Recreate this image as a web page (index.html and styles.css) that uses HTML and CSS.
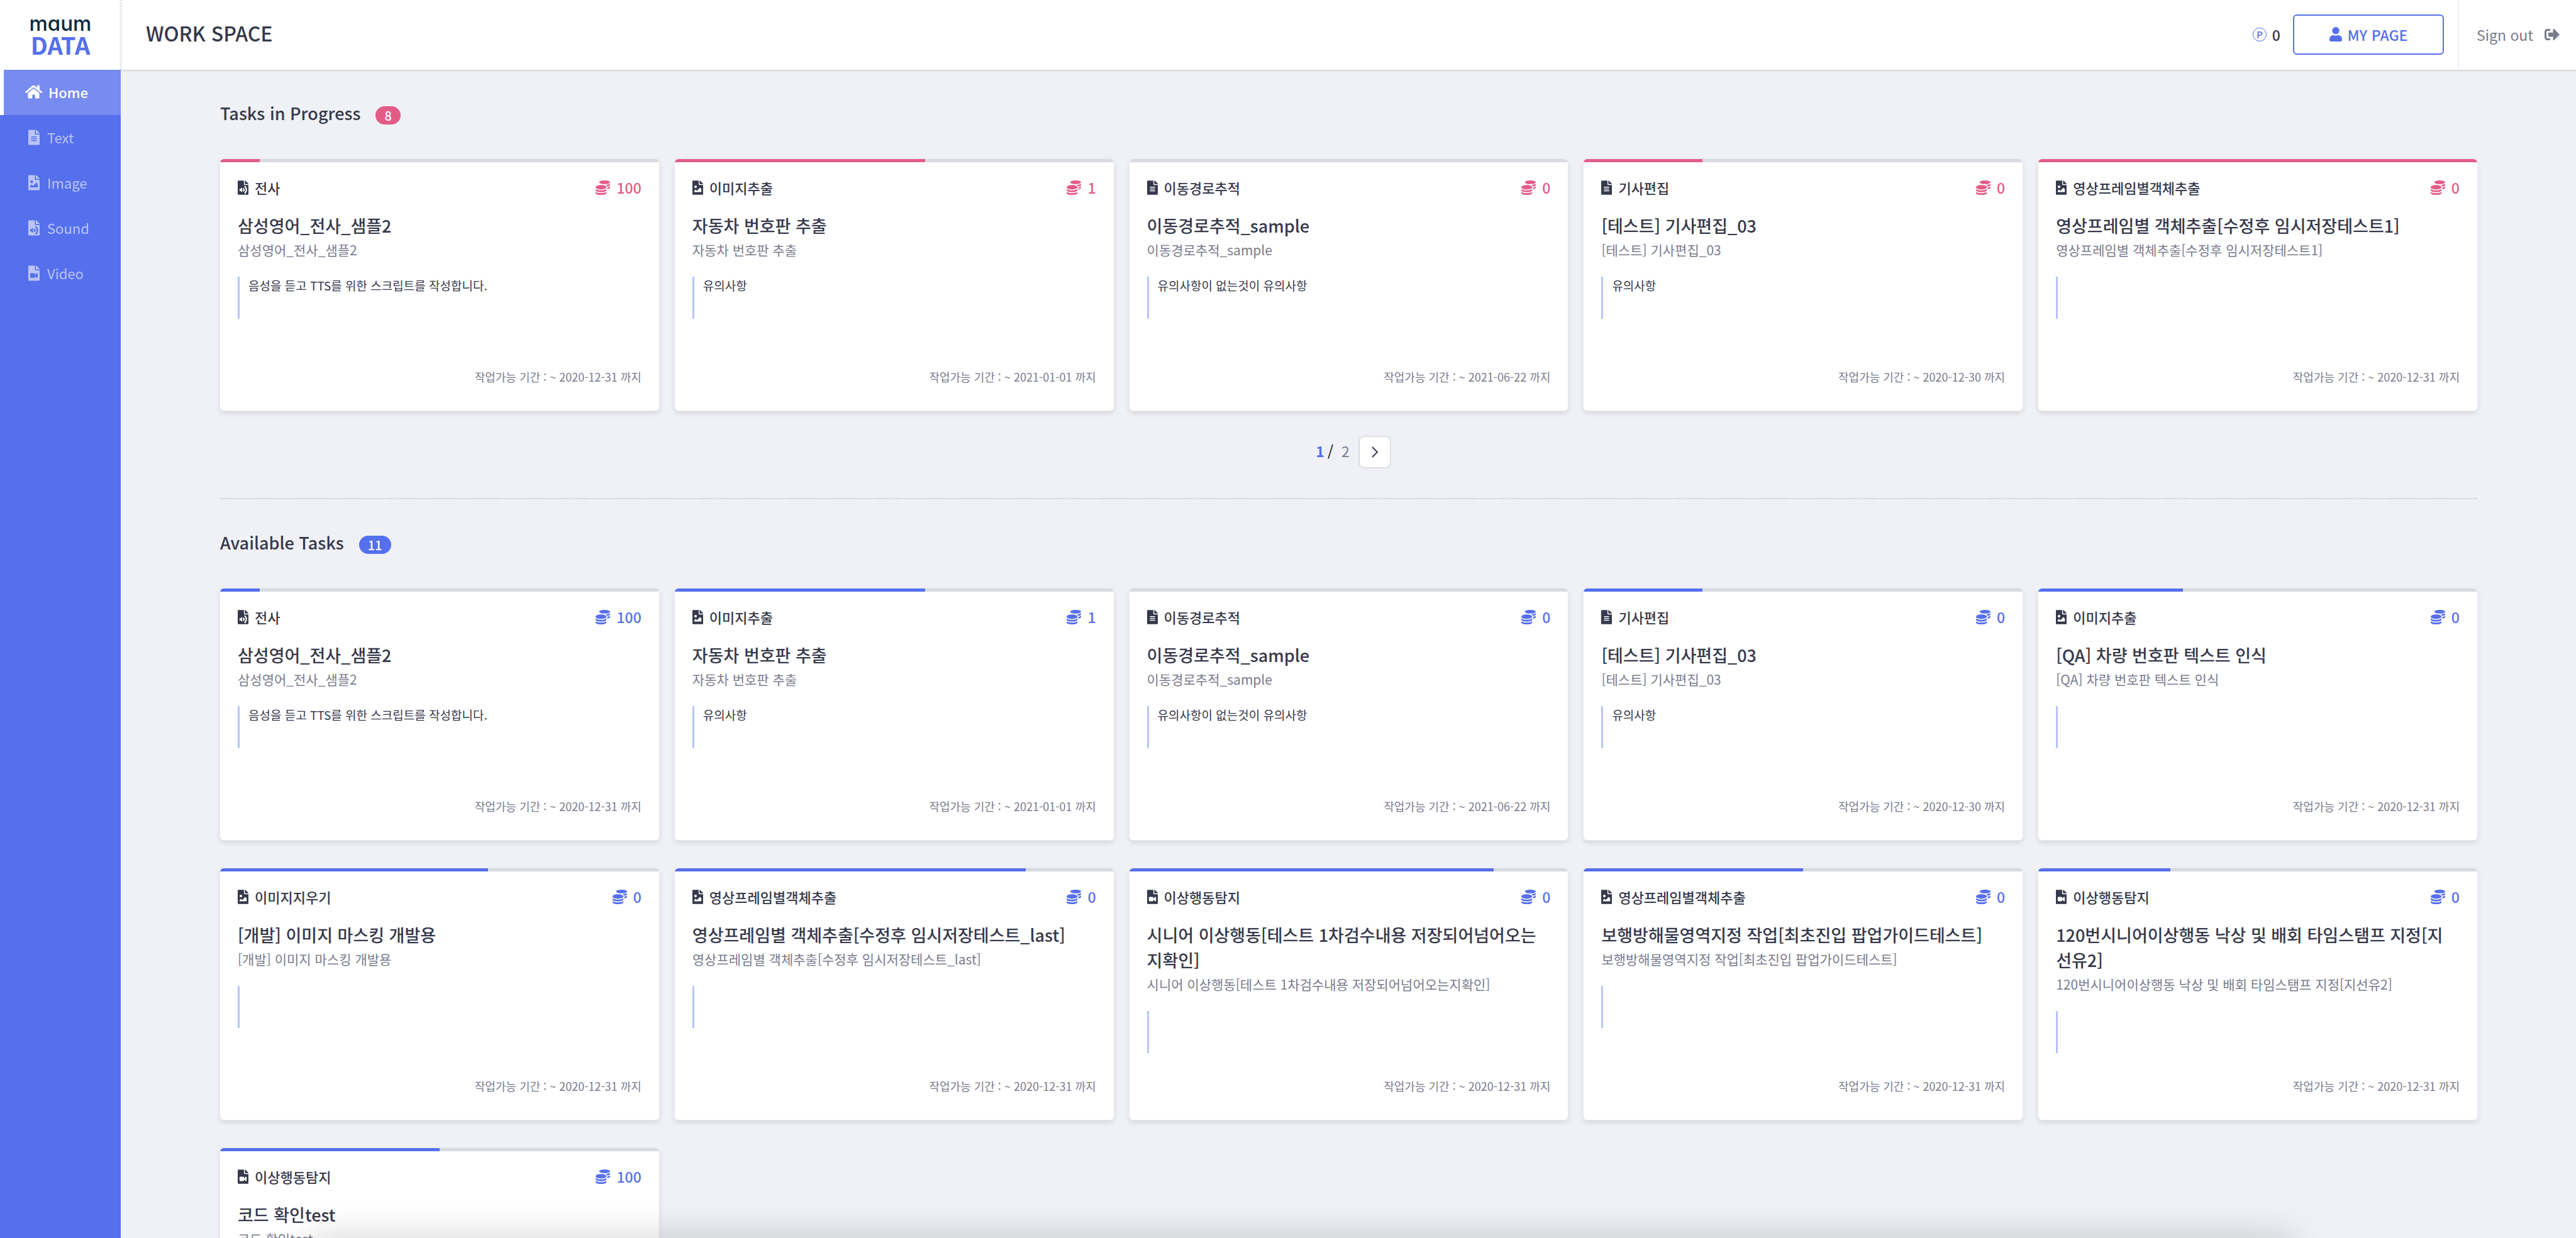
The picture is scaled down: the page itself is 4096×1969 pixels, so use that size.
FILE: index.html
```html
<!DOCTYPE html>
<html lang="ko">
<head>
<meta charset="utf-8">
<title>WORK SPACE</title>
<link rel="stylesheet" href="styles.css">
</head>
<body>
<svg class="sprite" aria-hidden="true">
  <symbol id="i-home" viewBox="0 0 576 512"><path d="M280 149 96 300v164a16 16 0 0 0 16 16l112-1a16 16 0 0 0 16-16v-95a16 16 0 0 1 16-16h64a16 16 0 0 1 16 16v95a16 16 0 0 0 16 16l112 1a16 16 0 0 0 16-16V300L296 149a12 12 0 0 0-16 0zM572 251l-84-69V44a12 12 0 0 0-12-12h-56a12 12 0 0 0-12 12v72l-90-74a48 48 0 0 0-61 0L4 251a12 12 0 0 0-1 17l25 31a12 12 0 0 0 17 2l235-194a12 12 0 0 1 16 0l235 194a12 12 0 0 0 17-2l25-31a12 12 0 0 0-1-17z"/></symbol>
  <symbol id="i-text" viewBox="0 0 384 512"><path fill-rule="evenodd" d="M224 136V0H24A24 24 0 0 0 0 24v464a24 24 0 0 0 24 24h336a24 24 0 0 0 24-24V160H248a24 24 0 0 1-24-24zm64 236c0 7-5 12-12 12H108c-7 0-12-5-12-12v-8c0-7 5-12 12-12h168c7 0 12 5 12 12zm0-64c0 7-5 12-12 12H108c-7 0-12-5-12-12v-8c0-7 5-12 12-12h168c7 0 12 5 12 12zm0-72v8c0 7-5 12-12 12H108c-7 0-12-5-12-12v-8c0-7 5-12 12-12h168c7 0 12 5 12 12zm96-114v6H256V0h6a24 24 0 0 1 17 7l98 98a24 24 0 0 1 7 17z"/></symbol>
  <symbol id="i-image" viewBox="0 0 384 512"><path fill-rule="evenodd" d="M384 122v6H256V0h6a24 24 0 0 1 17 7l98 98a24 24 0 0 1 7 17zm-136 38a24 24 0 0 1-24-24V0H24A24 24 0 0 0 0 24v464a24 24 0 0 0 24 24h336a24 24 0 0 0 24-24V160zm-135 16a48 48 0 1 1 0 96 48 48 0 0 1 0-96zm208 240H65l1-49 39-39a12 12 0 0 1 16 1l39 39 104-105a12 12 0 0 1 17 0l40 41z"/></symbol>
  <symbol id="i-sound" viewBox="0 0 384 512"><path fill-rule="evenodd" d="M224 136V0H24A24 24 0 0 0 0 24v464a24 24 0 0 0 24 24h336a24 24 0 0 0 24-24V160H248a24 24 0 0 1-24-24zm-64 268a12 12 0 0 1-20 9l-36-37H76a12 12 0 0 1-12-12v-56a12 12 0 0 1 12-12h28l36-37a12 12 0 0 1 20 9zm33-48a27 27 0 0 0 0-39c-22-22 12-57 35-34a75 75 0 0 1 0 107c-22 22-57-11-35-34zm86-154a190 190 0 0 1 0 268c-22 22-57-11-35-34a141 141 0 0 0 0-199c-22-23 13-57 35-35zm105-80v6H256V0h6a24 24 0 0 1 17 7l98 98a24 24 0 0 1 7 17z"/></symbol>
  <symbol id="i-video" viewBox="0 0 384 512"><path fill-rule="evenodd" d="M384 122v6H256V0h6a24 24 0 0 1 17 7l98 98a24 24 0 0 1 7 17zM224 136V0H24A24 24 0 0 0 0 24v464a24 24 0 0 0 24 24h336a24 24 0 0 0 24-24V160H248a24 24 0 0 1-24-24zm96 144v112c0 21-26 32-41 17l-55-55v38a24 24 0 0 1-24 24H88a24 24 0 0 1-24-24V280a24 24 0 0 1 24-24h112a24 24 0 0 1 24 24v38l55-55c15-15 41-4 41 17z"/></symbol>
  <symbol id="i-coins" viewBox="0 0 512 512"><path d="M0 405v43c0 35 86 64 192 64s192-29 192-64v-43c-41 29-117 43-192 43S41 434 0 405zm320-277c106 0 192-29 192-64S426 0 320 0 128 29 128 64s86 64 192 64zM0 300v52c0 35 86 64 192 64s192-29 192-64v-52c-41 34-117 52-192 52S41 334 0 300zm416 11c57-11 96-32 96-55v-43c-23 16-57 27-96 35zM192 160C86 160 0 196 0 240s86 80 192 80 192-36 192-80-86-80-192-80zm219 56c60-11 101-32 101-56v-43c-35 25-96 39-161 42 30 14 52 33 60 57z"/></symbol>
  <symbol id="i-user" viewBox="0 0 448 512"><path d="M224 256a128 128 0 1 0 0-256 128 128 0 0 0 0 256zm90 32h-17a174 174 0 0 1-146 0h-17A134 134 0 0 0 0 422v42a48 48 0 0 0 48 48h352a48 48 0 0 0 48-48v-42a134 134 0 0 0-134-134z"/></symbol>
  <symbol id="i-out" viewBox="0 0 512 512"><path d="M497 273 329 441c-15 15-41 5-41-17v-96H152a24 24 0 0 1-24-24v-96a24 24 0 0 1 24-24h136V88c0-21 26-32 41-17l168 168a24 24 0 0 1 0 34zM192 436v-40a12 12 0 0 0-12-12H96a32 32 0 0 1-32-32V160a32 32 0 0 1 32-32h84a12 12 0 0 0 12-12V76a12 12 0 0 0-12-12H96a96 96 0 0 0-96 96v192a96 96 0 0 0 96 96h84a12 12 0 0 0 12-12z"/></symbol>
</svg>

<aside class="sidebar">
  <a class="logo" href="#"><span class="logo-maum">maum</span><span class="logo-data">DATA</span></a>
  <nav class="nav">
    <a class="nav-item active" href="#"><svg class="nav-icon home"><use href="#i-home"/></svg>Home</a>
    <a class="nav-item" href="#"><svg class="nav-icon"><use href="#i-text"/></svg>Text</a>
    <a class="nav-item" href="#"><svg class="nav-icon"><use href="#i-image"/></svg>Image</a>
    <a class="nav-item" href="#"><svg class="nav-icon"><use href="#i-sound"/></svg>Sound</a>
    <a class="nav-item" href="#"><svg class="nav-icon"><use href="#i-video"/></svg>Video</a>
  </nav>
</aside>

<div class="page">
  <header class="header">
    <h1 class="page-title">WORK SPACE</h1>
    <div class="account">
      <span class="points"><span class="point-mark">P</span>0</span>
      <button class="my-page" type="button"><svg class="user-icon"><use href="#i-user"/></svg>MY PAGE</button>
      <a class="sign-out" href="#">Sign out<svg class="out-icon"><use href="#i-out"/></svg></a>
    </div>
  </header>

  <main class="content">
    <section class="progress-tasks">
      <h2 class="section-title">Tasks in Progress<span class="badge">8</span></h2>
      <div class="cards" id="progress-cards"></div>
      <div class="pager">
        <span class="pager-now">1</span><span class="pager-slash">/</span><span class="pager-total">2</span>
        <button class="pager-next" type="button" aria-label="Next page"><svg class="chevron" viewBox="0 0 12 20"><path d="M2 2l8 8-8 8"/></svg></button>
      </div>
    </section>
    <section class="available-tasks">
      <h2 class="section-title">Available Tasks<span class="badge">11</span></h2>
      <div class="cards" id="available-cards"></div>
    </section>
  </main>
</div>
<div class="bottom-shade"></div>
<script src="tasks.js"></script>
</body>
</html>
```
FILE: styles.css
```css
* { box-sizing: border-box; }

:root {
  --blue: #566fed;
  --pink: #e35c87;
  --ink: #36384b;
  --grey: #7a7b8c;
  --back: #eff1f6;
}

html { height: 100%; overflow: hidden; }

body {
  margin: 0;
  height: 100%;
  display: flex;
  overflow: hidden;
  background: var(--back);
  color: var(--ink);
  font-family: "Noto Sans CJK KR", "Noto Sans", sans-serif;
  font-size: 23px;
  font-weight: 500;
}

a { color: inherit; text-decoration: none; }
button { font: inherit; cursor: pointer; }
svg { fill: currentColor; display: block; flex: none; }
.sprite { position: absolute; width: 0; height: 0; }

/* Sidebar */
.sidebar { flex: 0 0 192px; background: var(--blue); }

.logo {
  height: 111px;
  padding-top: 20px;
  display: flex;
  flex-direction: column;
  align-items: center;
  background: #fff;
}
.logo-maum {
  color: #07283f;
  font: 500 33px/34px Inter, sans-serif;
  font-feature-settings: "cv11";
}
.logo-data { color: var(--blue); font-size: 38px; font-weight: 700; line-height: 34px; }

.nav-item {
  height: 72px;
  padding: 0 0 2px 45px;
  display: flex;
  align-items: center;
  gap: 12px;
  color: #bac4f8;
  font-size: 22px;
  font-weight: 400;
}
.nav-item.active {
  padding-left: 34px;
  gap: 10px;
  border-left: 6px solid #fff;
  background: #788bf1;
  color: #fff;
  font-weight: 500;
}
.nav-icon { width: 18px; height: 25px; }
.nav-icon.home { width: 27px; height: 24px; }

/* Header */
.page { flex: 1; min-width: 0; }

.header {
  height: 111px;
  padding-left: 38px;
  display: flex;
  justify-content: space-between;
  background: #fff;
  border-left: 2px dotted #dcdff0;
  box-shadow: 0 1px 3px rgba(0, 0, 0, .2);
}
.page-title { margin: 0; font-size: 32px; font-weight: 500; line-height: 105px; }

.account { display: flex; align-items: center; }
.points { display: flex; align-items: center; gap: 9px; margin: 0 20px 2px 0; }
.point-mark {
  width: 22px;
  height: 22px;
  border: 1px solid var(--blue);
  border-radius: 50%;
  color: var(--blue);
  font-size: 15px;
  line-height: 19px;
  text-align: center;
}
.my-page {
  width: 240px;
  height: 64px;
  margin-bottom: 2px;
  padding: 0;
  display: flex;
  align-items: center;
  justify-content: center;
  gap: 9px;
  border: 2px solid var(--blue);
  border-radius: 6px;
  background: #fff;
  color: var(--blue);
}
.user-icon { width: 20px; height: 23px; }
.sign-out {
  height: 100%;
  margin-left: 22px;
  padding: 0 26px 2px 28px;
  display: flex;
  align-items: center;
  gap: 18px;
  border-left: 2px solid var(--back);
  color: var(--grey);
  font-weight: 400;
}
.out-icon { width: 24px; height: 24px; }

/* Sections */
.content { padding: 50px 157px 0 158px; }

.section-title {
  margin: 0 0 54px;
  display: flex;
  align-items: center;
  gap: 24px;
  font-size: 27px;
  font-weight: 500;
  line-height: 38px;
}
.badge {
  margin-top: 6px;
  padding: 0 14px;
  border-radius: 15px;
  background: var(--pink);
  color: #fff;
  font-size: 20px;
  line-height: 29px;
}
.available-tasks .badge { background: var(--blue); }

.cards {
  display: grid;
  grid-template-columns: repeat(5, 1fr);
  gap: 45px 25px;
}

/* Card */
.card {
  min-height: 400px;
  display: flex;
  flex-direction: column;
  overflow: hidden;
  border-radius: 6px;
  background: #fff;
  box-shadow: 0 0 0 1px #ebecf1, 0 4px 8px rgba(0, 0, 0, .12);
}
.meter { height: 5px; background: #d9dae1; }
.meter-fill { height: 100%; background: var(--pink); }
.available-tasks .meter-fill { background: var(--blue); }

.card-body {
  flex: 1;
  padding: 24px 28px 41px;
  display: flex;
  flex-direction: column;
}
.card-head { display: flex; justify-content: space-between; line-height: 32px; }
.kind, .reward { display: flex; align-items: center; gap: 10px; }
.kind { font-size: 22px; }
.reward { color: var(--pink); }
.available-tasks .reward { color: var(--blue); }
.kind-icon { width: 17px; height: 23px; }
.coins { width: 23px; height: 23px; }

.card-title {
  margin: 25px 0 3px;
  padding-right: 6px;
  font-size: 27px;
  font-weight: 500;
  line-height: 40px;
  word-break: break-all;
}
.card-sub { margin: 0 0 28px; color: var(--grey); font-size: 21px; font-weight: 400; line-height: 30px; }
.card-note {
  min-height: 67px;
  margin: 0;
  padding-left: 14px;
  border-left: 3px solid #bac4f8;
  font-size: 19px;
  font-weight: 400;
  line-height: 28px;
}
.card-date {
  margin: auto 0 0;
  color: var(--grey);
  font-size: 18px;
  font-weight: 400;
  line-height: 26px;
  text-align: right;
}

/* Pager */
.pager {
  margin-top: 42px;
  padding: 0 0 49px 13px;
  display: flex;
  align-items: center;
  justify-content: center;
  border-bottom: 2px dotted #c9cbda;
}
.pager span { padding-bottom: 4px; }
.pager-now { color: var(--blue); font-weight: 700; }
.pager-slash { margin: 0 13px 0 5px; color: #000; font-weight: 400; }
.pager-total { margin-right: 16px; color: var(--grey); font-weight: 400; }
.pager-next {
  width: 48px;
  height: 48px;
  padding: 0;
  display: flex;
  align-items: center;
  justify-content: center;
  border: 0;
  border-radius: 7px;
  background: #fff;
  color: var(--ink);
  box-shadow: 0 0 3px rgba(0, 0, 0, .3);
}
.chevron { width: 12px; height: 20px; fill: none; stroke: currentColor; stroke-width: 2; }

.available-tasks { padding-top: 50px; }

/* Soft shade along the lower edge of the window */
.bottom-shade {
  position: fixed;
  left: 12%;
  right: 11%;
  bottom: -120px;
  height: 120px;
  box-shadow: 0 0 60px rgba(0, 0, 0, .18);
}
```
FILE: tasks.js
```js
const progressTasks = [
  { icon: "sound", kind: "전사", reward: 100, title: "삼성영어_전사_샘플2", note: "음성을 듣고 TTS를 위한 스크립트를 작성합니다.", until: "2020-12-31", done: 9 },
  { icon: "image", kind: "이미지추출", reward: 1, title: "자동차 번호판 추출", note: "유의사항", until: "2021-01-01", done: 57 },
  { icon: "text", kind: "이동경로추적", reward: 0, title: "이동경로추적_sample", note: "유의사항이 없는것이 유의사항", until: "2021-06-22", done: 0 },
  { icon: "text", kind: "기사편집", reward: 0, title: "[테스트] 기사편집_03", note: "유의사항", until: "2020-12-30", done: 27 },
  { icon: "image", kind: "영상프레임별객체추출", reward: 0, title: "영상프레임별 객체추출[수정후 임시저장테스트1]", note: "", until: "2020-12-31", done: 100 }
];

const availableTasks = [
  ...progressTasks.slice(0, 4),
  { icon: "image", kind: "이미지추출", reward: 0, title: "[QA] 차량 번호판 텍스트 인식", note: "", until: "2020-12-31", done: 33 },
  { icon: "image", kind: "이미지지우기", reward: 0, title: "[개발] 이미지 마스킹 개발용", note: "", until: "2020-12-31", done: 61 },
  { icon: "image", kind: "영상프레임별객체추출", reward: 0, title: "영상프레임별 객체추출[수정후 임시저장테스트_last]", note: "", until: "2020-12-31", done: 80 },
  { icon: "video", kind: "이상행동탐지", reward: 0, title: "시니어 이상행동[테스트 1차검수내용 저장되어넘어오는지확인]", note: "", until: "2020-12-31", done: 83 },
  { icon: "image", kind: "영상프레임별객체추출", reward: 0, title: "보행방해물영역지정 작업[최초진입 팝업가이드테스트]", note: "", until: "2020-12-31", done: 50 },
  { icon: "video", kind: "이상행동탐지", reward: 0, title: "120번시니어이상행동 낙상 및 배회 타임스탬프 지정[지선유2]", note: "", until: "2020-12-31", done: 30 },
  { icon: "video", kind: "이상행동탐지", reward: 100, title: "코드 확인test", note: "", until: "2020-12-31", done: 50 }
];

function card(task) {
  return `<article class="card">
    <div class="meter"><div class="meter-fill" style="width: ${task.done}%"></div></div>
    <div class="card-body">
      <div class="card-head">
        <span class="kind"><svg class="kind-icon"><use href="#i-${task.icon}"/></svg>${task.kind}</span>
        <span class="reward"><svg class="coins"><use href="#i-coins"/></svg>${task.reward}</span>
      </div>
      <h3 class="card-title">${task.title}</h3>
      <p class="card-sub">${task.title}</p>
      <p class="card-note">${task.note}</p>
      <p class="card-date">작업가능 기간 : ~ ${task.until} 까지</p>
    </div>
  </article>`;
}

document.getElementById("progress-cards").innerHTML = progressTasks.map(card).join("");
document.getElementById("available-cards").innerHTML = availableTasks.map(card).join("");
```
